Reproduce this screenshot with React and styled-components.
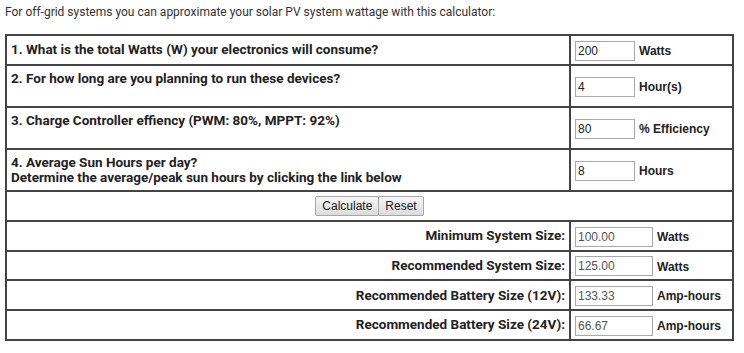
import styled, { createGlobalStyle } from 'styled-components'

const GlobalStyle = createGlobalStyle`
  body {
    margin: 0;
    background: #ffffff;
    color: #222;
  }
`

const Page = styled.div`
  padding: 4px 10px 0 5px;
  font-family: Roboto, "Liberation Sans", Arial, sans-serif;
`

const Intro = styled.p`
  margin: 0 0 14px;
  font-size: 12px;
  line-height: 16px;
  color: #333;
`

const Table = styled.table`
  width: 729px;
  border-collapse: collapse;
  border: 2px solid #444;
`

const LabelCell = styled.td`
  border: 2px solid #444;
  padding: 5px 4px 5px 4px;
  font-family: Roboto, "Liberation Sans", sans-serif;
  font-weight: bold;
  font-size: 13.5px;
  line-height: 15px;
  color: #222;
  text-align: ${(p) => (p.$right ? 'right' : 'left')};
  vertical-align: middle;
  width: 554px;
`

const InputCell = styled.td`
  border: 2px solid #444;
  padding: 4px 4px 3px;
  vertical-align: middle;
  white-space: nowrap;
`

const Field = styled.input`
  width: ${(p) => (p.$wide ? '78px' : '60px')};
  height: 20px;
  box-sizing: border-box;
  margin: 0 4px 0 0;
  padding: 1px 2px;
  border: 1px solid #a9a9a9;
  font-family: "Liberation Sans", Arial, sans-serif;
  font-size: 12px;
  color: ${(p) => (p.readOnly ? '#555' : '#222')};
  background: #fff;
  vertical-align: middle;
`

const Unit = styled.span`
  font-family: "Liberation Sans", Arial, sans-serif;
  font-weight: bold;
  font-size: 12px;
  color: #222;
  vertical-align: middle;
`

const ButtonCell = styled.td`
  border: 2px solid #444;
  padding: 3px 0 3px;
  height: 22px;
  text-align: center;
  font-size: 0;
`

const Button = styled.button`
  height: 20px;
  padding: 0 6px;
  border: 1px solid #a6a6a6;
  border-radius: 2px;
  background: linear-gradient(#f6f6f6, #dcdcdc);
  font-family: "Liberation Sans", Arial, sans-serif;
  font-size: 12px;
  color: #222;
  margin-right: ${(p) => (p.$last ? '0' : '-1px')};
`

const questions = [
  { lines: ['1. What is the total Watts (W) your electronics will consume?'], value: '200', unit: 'Watts' },
  { lines: ['2. For how long are you planning to run these devices?', '\u00a0'], value: '4', unit: 'Hour(s)' },
  { lines: ['3. Charge Controller effiency (PWM: 80%, MPPT: 92%)', '\u00a0'], value: '80', unit: '% Efficiency' },
  {
    lines: ['4. Average Sun Hours per day?', 'Determine the average/peak sun hours by clicking the link below'],
    value: '8',
    unit: 'Hours',
  },
]

const results = [
  { label: 'Minimum System Size:', value: '100.00', unit: 'Watts' },
  { label: 'Recommended System Size:', value: '125.00', unit: 'Watts' },
  { label: 'Recommended Battery Size (12V):', value: '133.33', unit: 'Amp-hours' },
  { label: 'Recommended Battery Size (24V):', value: '66.67', unit: 'Amp-hours' },
]

export default function App() {
  return (
    <>
      <GlobalStyle />
      <Page>
        <Intro>For off-grid systems you can approximate your solar PV system wattage with this calculator:</Intro>
        <Table>
          <tbody>
            {questions.map((q) => (
              <tr key={q.value}>
                <LabelCell>
                  {q.lines.map((l, i) => (
                    <div key={i}>{l}</div>
                  ))}
                </LabelCell>
                <InputCell>
                  <Field defaultValue={q.value} />
                  <Unit>{q.unit}</Unit>
                </InputCell>
              </tr>
            ))}
            <tr>
              <ButtonCell colSpan={2}>
                <Button>Calculate</Button>
                <Button $last>Reset</Button>
              </ButtonCell>
            </tr>
            {results.map((r) => (
              <tr key={r.label}>
                <LabelCell $right>{r.label}</LabelCell>
                <InputCell>
                  <Field $wide readOnly value={r.value} />
                  <Unit>{r.unit}</Unit>
                </InputCell>
              </tr>
            ))}
          </tbody>
        </Table>
      </Page>
    </>
  )
}
